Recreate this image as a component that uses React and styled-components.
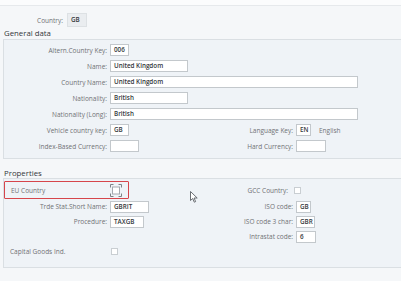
import styled, { createGlobalStyle } from "styled-components";

const Global = createGlobalStyle`
  html, body {
    margin: 0;
    padding: 0;
    background: #f5f7f9;
    overflow: hidden;
  }
  body {
    font-family: "Open Sans", "Liberation Sans", sans-serif;
    width: 401px;
    height: 281px;
    color: #32363a;
  }
`;

const Page = styled.div`
  position: relative;
  height: 281px;
`;

const TopBar = styled.div`
  height: 5px;
  background: #fbfcfd;
  border-bottom: 1px solid #e6e9ec;
`;

const CountryRow = styled.div`
  display: flex;
  align-items: center;
  gap: 4px;
  margin-top: 7px;
  height: 14px;
`;

const Title = styled.div`
  padding-left: 4px;
  font-size: 7.8px;
  line-height: 10px;
  padding-top: ${(p) => p.$top || 1}px;
  height: ${(p) => p.$h || 10}px;
  color: #32363a;
`;

const Panel = styled.div`
  margin-left: 3px;
  background: #eff3f7;
  border: 1px solid #dadfe3;
  border-right: none;
  padding: ${(p) => p.$pad};
`;

const Row = styled.div`
  display: grid;
  grid-template-columns: 103px 90px 90px 1fr;
  column-gap: 3px;
  align-items: center;
  height: ${(p) => p.$h || 16}px;
`;

const Label = styled.div`
  font-size: 6.5px;
  color: #6f7275;
  text-align: ${(p) => (p.$left ? "left" : "right")};
  padding-left: ${(p) => (p.$left ? 6 : 0)}px;
  padding-right: ${(p) => p.$pr || 0}px;
  white-space: nowrap;
  width: ${(p) => (p.$w ? `${p.$w}px` : "auto")};
  grid-column: ${(p) => p.$col || "auto"};
`;

const Input = styled.div`
  box-sizing: border-box;
  width: ${(p) => p.$w}px;
  height: ${(p) => p.$h || 12}px;
  background: ${(p) => (p.$ro ? "#eaedf0" : "#ffffff")};
  border: 1px solid ${(p) => (p.$ro ? "#dde1e4" : "#c3c8cc")};
  font-size: 6.3px;
  font-weight: 600;
  line-height: ${(p) => (p.$h || 12) - 2}px;
  padding-left: 3px;
  color: #33373b;
  white-space: nowrap;
  overflow: hidden;
  grid-column: ${(p) => p.$col || "auto"};
`;

const Cell = styled.div`
  display: flex;
  align-items: center;
  gap: ${(p) => p.$gap || 0}px;
  grid-column: ${(p) => p.$col || "auto"};
`;

const Plain = styled.span`
  font-size: 6.5px;
  color: #6f7275;
`;

const Check = styled.div`
  box-sizing: border-box;
  width: 7px;
  height: 7px;
  background: #ffffff;
  border: 1px solid #c9ced2;
  margin-left: ${(p) => p.$ml || 0}px;
`;

const Highlight = styled.div`
  grid-column: 1 / 3;
  box-sizing: border-box;
  width: 125px;
  height: 18px;
  border: 1.5px solid #d6454b;
  border-radius: 1px;
  display: flex;
  align-items: center;
  justify-content: space-between;
  padding-left: 4px;
  padding-right: 6px;
`;

const Cursor = styled.svg`
  position: absolute;
  left: 190px;
  top: 191px;
`;

const FocusCheck = () => (
  <svg width="12" height="13" viewBox="0 0 12 13">
    <rect x="2.5" y="3" width="7" height="7" fill="#fff" stroke="#a4aab0" strokeWidth="1" />
    <path
      d="M0.5 3.5V0.5H3.5M8.5 0.5H11.5V3.5M11.5 9.5V12.5H8.5M3.5 12.5H0.5V9.5"
      fill="none"
      stroke="#7d8287"
      strokeWidth="1"
    />
  </svg>
);

export default function App() {
  return (
    <Page>
      <Global />
      <TopBar />
      <CountryRow>
        <Label $w={63}>Country:</Label>
        <Input $w={20} $h={14} $ro>GB</Input>
      </CountryRow>
      <Title $top={1} $h={11}>General data</Title>
      <Panel $pad="2px 0 4px">
        <Row>
          <Label>Altern.Country Key:</Label>
          <Input $w={19}>006</Input>
        </Row>
        <Row>
          <Label>Name:</Label>
          <Input $w={78}>United Kingdom</Input>
        </Row>
        <Row>
          <Label>Country Name:</Label>
          <Input $w={248} $col="2 / 5">United Kingdom</Input>
        </Row>
        <Row>
          <Label>Nationality:</Label>
          <Input $w={78}>British</Input>
        </Row>
        <Row>
          <Label>Nationality (Long):</Label>
          <Input $w={248} $col="2 / 5">British</Input>
        </Row>
        <Row>
          <Label>Vehicle country key:</Label>
          <Input $w={19}>GB</Input>
          <Label>Language Key:</Label>
          <Cell $gap={8}>
            <Input $w={15}>EN</Input>
            <Plain>English</Plain>
          </Cell>
        </Row>
        <Row>
          <Label>Index-Based Currency:</Label>
          <Input $w={29} />
          <Label>Hard Currency:</Label>
          <Input $w={30} />
        </Row>
      </Panel>
      <Title $top={9} $h={10}>Properties</Title>
      <Panel $pad="2px 0 8px">
        <Row $h={18}>
          <Highlight>
            <Label $left style={{ paddingLeft: 2 }}>EU Country</Label>
            <FocusCheck />
          </Highlight>
          <Label $pr={5}>GCC Country:</Label>
          <Check $ml={-2} />
        </Row>
        <Row $h={15}>
          <Label>Trde Stat.Short Name:</Label>
          <Input $w={39}>GBRIT</Input>
          <Label>ISO code:</Label>
          <Input $w={15}>GB</Input>
        </Row>
        <Row $h={15}>
          <Label>Procedure:</Label>
          <Input $w={34}>TAXGB</Input>
          <Label>ISO code 3 char:</Label>
          <Input $w={19}>GBR</Input>
        </Row>
        <Row $h={15}>
          <Label $col="3">Intrastat code:</Label>
          <Input $w={20}>6</Input>
        </Row>
        <Row $h={15}>
          <Label $left>Capital Goods Ind.</Label>
          <Check $ml={1} />
        </Row>
      </Panel>
      <Cursor width="8" height="12" viewBox="0 0 8 12">
        <path d="M0.5 0.5V9.5L2.7 7.5L4.3 11.2L5.6 10.6L4.1 7H7.2Z" fill="#fff" stroke="#5a5f64" strokeWidth="0.9" strokeLinejoin="round" />
      </Cursor>
    </Page>
  );
}
